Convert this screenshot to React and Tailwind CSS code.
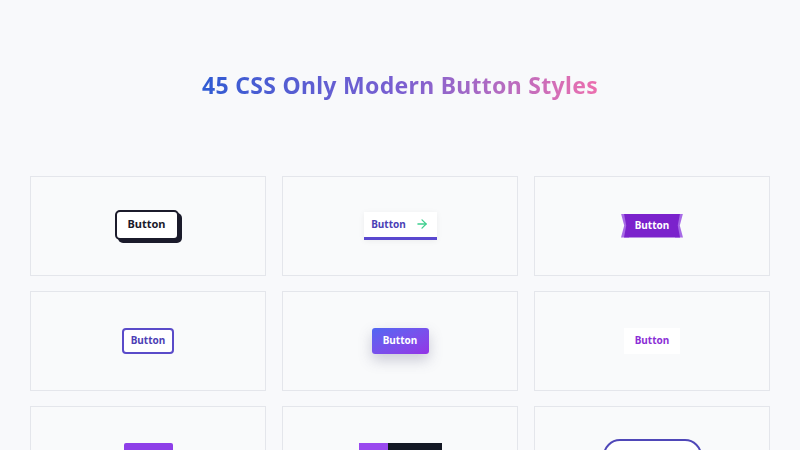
import { ArrowRight } from 'lucide-react';

const font = { fontFamily: '"Noto Sans", "Open Sans", sans-serif' };

function Card({ children }) {
    return (
        <div className="h-[100px] border border-[#e4e6eb] bg-[#f9fafb] flex items-center justify-center">
            {children}
        </div>
    );
}

function App() {
    return (
        <div className="w-[800px] h-[450px] overflow-hidden bg-[#f8f9fb]" style={font}>
            <h1 className="pt-[68px] text-center text-[23px] font-bold tracking-[0.3px]">
                <span className="bg-gradient-to-r from-[#2e5bd3] via-[#7a5fd1] to-[#ec6fae] bg-clip-text text-transparent">
                    45 CSS Only Modern Button Styles
                </span>
            </h1>

            <div className="mt-[73px] px-[30px] grid grid-cols-3 gap-x-[16px] gap-y-[15px]">
                {/* 1: offset shadow */}
                <Card>
                    <button className="ml-[-3px] mt-[-2px] h-[30px] w-[64px] rounded-[5px] border-2 border-[#1b1b2b] bg-white text-[11px] font-bold text-[#1b1b2b] shadow-[3px_3px_0_#1b1b2b]">
                        Button
                    </button>
                </Card>

                {/* 2: underline with arrow */}
                <Card>
                    <button className="flex h-[28px] w-[73px] items-center justify-center gap-[9px] border-b-[3px] border-[#5a48cf] bg-white text-[10px] font-bold text-[#4b3fb6] shadow-[0_1px_6px_rgba(0,0,0,0.06)]">
                        Button
                        <ArrowRight size={14} strokeWidth={2.2} className="text-[#3ecf8e]" />
                    </button>
                </Card>

                {/* 3: ribbon */}
                <Card>
                    <div className="relative flex h-[24px] w-[62px] items-center justify-center">
                        <div className="absolute left-0 top-0 h-full w-[8px] bg-[#a76ae6] [clip-path:polygon(0_0,100%_0,100%_100%,0_100%,40%_50%)]"></div>
                        <div className="absolute right-0 top-0 h-full w-[8px] bg-[#a76ae6] [clip-path:polygon(0_0,100%_0,60%_50%,100%_100%,0_100%)]"></div>
                        <div className="absolute inset-y-0 left-[3px] right-[3px] bg-[#7b22cc] [clip-path:polygon(0_0,100%_0,96%_50%,100%_100%,0_100%,4%_50%)]"></div>
                        <span className="relative text-[10px] font-bold text-white">Button</span>
                    </div>
                </Card>

                {/* 4: outline */}
                <Card>
                    <button className="h-[26px] w-[52px] rounded-[4px] border-2 border-[#5a4bc9] bg-white text-[10px] font-bold text-[#4d40b5]">
                        Button
                    </button>
                </Card>

                {/* 5: gradient with glow */}
                <Card>
                    <button className="h-[26px] w-[57px] rounded-[3px] bg-gradient-to-br from-[#4f67f2] to-[#9332e6] text-[10px] font-bold text-white shadow-[0_6px_14px_rgba(80,80,120,0.28)]">
                        Button
                    </button>
                </Card>

                {/* 6: plain white */}
                <Card>
                    <button className="h-[26px] w-[56px] bg-white text-[10px] font-bold text-[#8b2fd6]">
                        Button
                    </button>
                </Card>

                {/* 7: solid purple */}
                <Card>
                    <button className="h-[26px] w-[49px] rounded-t-[2px] bg-[#8e3fe8] text-[10px] font-bold text-white">
                        Button
                    </button>
                </Card>

                {/* 8: split */}
                <Card>
                    <div className="flex h-[26px] w-[83px]">
                        <div className="w-[29px] bg-[#9a49ef]"></div>
                        <div className="flex-1 bg-[#141824]"></div>
                    </div>
                </Card>

                {/* 9: pill outline */}
                <Card>
                    <button className="h-[34px] w-[99px] rounded-full border-2 border-[#4f47b8] bg-white text-[10px] font-bold text-[#4f47b8]">
                        Button
                    </button>
                </Card>
            </div>
        </div>
    );
}

export default App;
